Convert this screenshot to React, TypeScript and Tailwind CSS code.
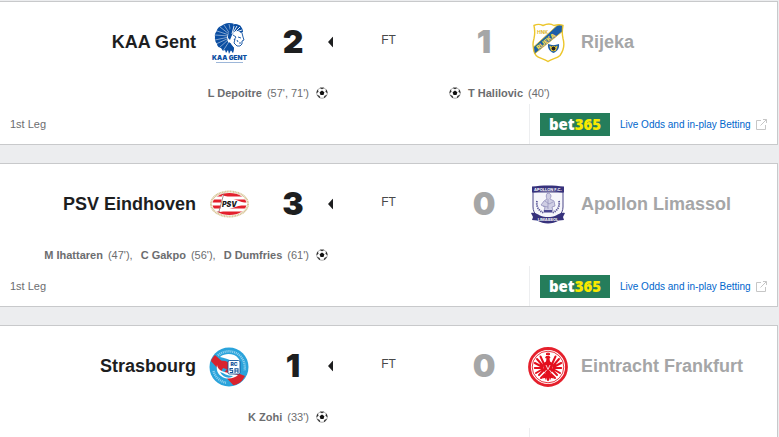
import type { ReactNode } from 'react';

type Goal = { player: string; minutes: string };

type Team = {
  name: string;
  score: number;
  badge: ReactNode;
  goals: Goal[];
};

type Match = {
  id: string;
  home: Team;
  away: Team;
  leg?: string;
};

const FEATHERS = [
  'M20 12 L8 8', 'M20 13 L6 12', 'M20 14 L6 17', 'M20 15 L7 21', 'M20 16 L10 25',
  'M20 11 L11 4', 'M21 11 L15 2', 'M22 10 L20 1', 'M23 10 L25 1', 'M21 17 L14 28',
];

function GentBadge() {
  return (
    <svg viewBox="0 0 40 40" className="w-10 h-10 mt-0.5 shrink-0" aria-hidden="true">
      <path
        d="M20 0c-3 0-5 1-7 2.500-3 1-5 3-5.500 6C6 10 5.500 12 6 14c-.5 3 .5 5 2 7 0 2 2 4 4 4l2 3 2-1 1 3 2-3 1 4 2-4 2 3 1-5-3-4 1-6 2-6 5-4 2-2C28 2 24 0 20 0Z"
        fill="#0b4ea2"
      />
      {FEATHERS.map((d) => (
        <path key={d} d={d} stroke="#fff" strokeWidth="0.600" opacity="0.8" />
      ))}
      <path d="M20 9c4-3 9-3 12 0l1 4 2 4-2 1v3l-2 2-5 1-3-3-4-2-1-5Z" fill="#fff" />
      <path d="M26 1c5 0 8 4 8 8l-2 1c-3-3-7-2-9 2l-2 5-2-2c0-6 2-10 7-14Z" fill="#0b4ea2" />
      <path d="M25 3l-2 8M28 3l-4 7M31 4l-6 6M33 7l-6 2" stroke="#fff" strokeWidth="0.900" />
      <path d="M33 10l1 4 1 3-2 1v3l-2 2h-3M29 14l3 1M26 16l-1 4 3 3M30 20h2M24 12l3 2-2 3M28 17l1 2" fill="none" stroke="#0b4ea2" strokeWidth="0.900" />
      <path d="M20 19l5 6-1 5-2-3-2 2Z" fill="#0b4ea2" />
      <text x="20.500" y="37" textAnchor="middle" fontSize="6.500" className="font-['Inter',sans-serif] font-black" fill="#0b4ea2">
        KAA GENT
      </text>
      <path d="M7 39.500H34" stroke="#0b4ea2" strokeWidth="0.8" opacity="0.5" />
    </svg>
  );
}

function RijekaBadge() {
  return (
    <svg viewBox="0 0 40 40" className="w-10 h-10 mt-0.5 shrink-0" aria-hidden="true">
      <path
        d="M6 2.500c3-1.500 7-1 9 0 4-2 8-2 11 0 3-1 6-1.500 9 0-1 5-1 9 0 13 1.500 5 .5 12-3 17-3 3-8 3-12 6-4-3-9-3-12-6-3-5-3.500-12-2-17 1-4 1-8 0-13Z"
        fill="#fff"
        stroke="#ecc62c"
        strokeWidth="1.400"
      />
      <path d="M29 2.500c2-.7 4-.7 5.500.2l-.3 6L6.500 31 5.500 24Z" fill="#1d5fa8" stroke="#ecc62c" strokeWidth="0.8" />
      <text x="9" y="10.500" fontSize="5" className="font-['Inter',sans-serif] font-bold" fill="#e0b62a">
        HNK
      </text>
      <text transform="translate(10.500 27) rotate(-39)" fontSize="6" className="font-['Inter',sans-serif] font-black" fill="#f1d556">
        RIJEKA
      </text>
      <path d="M20 21l4 1h3l4-1c.5 4-1 7-5.500 9-4.500-2-6-5-5.500-9Z" fill="#1d5fa8" />
      <path d="M22 23l2 5M29 23l-2 5" stroke="#ecc62c" strokeWidth="1.200" />
      <circle cx="25.500" cy="25.500" r="2.400" fill="#222" stroke="#ecc62c" strokeWidth="0.9" />
    </svg>
  );
}

function PsvBadge() {
  return (
    <svg viewBox="0 0 40 40" className="w-10 h-10 shrink-0" aria-hidden="true">
      <defs>
        <clipPath id="psv-oval">
          <ellipse cx="20.500" cy="20" rx="17" ry="11" />
        </clipPath>
      </defs>
      <ellipse cx="20.500" cy="20" rx="18.500" ry="12.500" fill="#fff" stroke="#d9c79a" strokeWidth="2" strokeDasharray="1.200 0.400" />
      <g clipPath="url(#psv-oval)">
        <path d="M0 9h40v3.500H0ZM0 15.500h40v3H0ZM0 21.500h40v3H0ZM0 27.500h40v4H0Z" fill="#e3202c" />
        <path d="M13 11L37 19.500 11 28Z" fill="#fff" />
        <path d="M15 9L9 31" stroke="#8d7474" strokeWidth="0.8" />
      </g>
      <text x="13" y="22.500" fontSize="7" className="font-['Inter',sans-serif] font-black italic" fill="#1a1a1a">
        PSV
      </text>
    </svg>
  );
}

function ApollonBadge() {
  return (
    <svg viewBox="0 0 40 40" className="w-10 h-10 mt-0.5 shrink-0" aria-hidden="true">
      <path d="M5 7h30v15c0 7-6 12-15 15C11 34 5 29 5 22Z" fill="#f6f6fb" stroke="#4a4688" strokeWidth="1" />
      <path d="M4 1.500c10-1.500 22-1.500 32 0v6c-10-1.500-22-1.500-32 0Z" fill="#37327c" />
      <text x="20" y="5.500" textAnchor="middle" fontSize="4" className="font-['Inter',sans-serif] font-bold" fill="#fff">
        APOLLON F.C.
      </text>
      <path d="M19 8.500c2-.8 4 .5 4 2.500 0 1.500-1 2-1 3l4 2 1 5-3 1 1 4h-9l1-4-4-2 3-4 3-2c-1-2-1-4 0-5.500Z" fill="#cfcee4" stroke="#8784b4" strokeWidth="0.7" />
      <path d="M17 16l4 3 4-2M15 21l5 1M20 14v10" fill="none" stroke="#8784b4" strokeWidth="0.6" />
      <path d="M9 16c-1 6 2 10 7 12M31 16c1 6-2 10-7 12" fill="none" stroke="#5a5698" strokeWidth="1.800" strokeDasharray="1.300 0.900" />
      <rect x="16" y="25" width="8" height="2.500" fill="#4b4790" />
      <path d="M3 28c4-1 6 1 9 2.500 5 2 11 2 16 0 3-1.500 5-3.500 9-2.500l-2 4 1 3-5 .5c-7 4-15 4-22 0L4 35l1-3Z" fill="#37327c" />
      <text x="20" y="36" textAnchor="middle" fontSize="4" className="font-['Inter',sans-serif] font-bold" fill="#fff">
        LIMASSOL
      </text>
    </svg>
  );
}

function StrasbourgBadge() {
  return (
    <svg viewBox="0 0 40 40" className="w-10 h-10 mt-0.5 shrink-0" aria-hidden="true">
      <defs>
        <clipPath id="rcs-disc">
          <circle cx="20" cy="20" r="19" />
        </clipPath>
      </defs>
      <circle cx="20" cy="20" r="19.500" fill="#2aa3db" />
      {/* Ring lettering is too small to read at this size */}
      <path d="M9 8.500A16 16 0 0 1 35.500 23.500" fill="none" stroke="#8fd0ee" strokeWidth="2.400" strokeDasharray="1.100 0.800" />
      <path d="M4.500 24A16 16 0 0 0 17 35.700" fill="none" stroke="#8fd0ee" strokeWidth="2.400" strokeDasharray="1.100 0.800" />
      <g clipPath="url(#rcs-disc)">
        <path d="M1 13L6 8 16 17 12 25Z" fill="#d9232e" />
        <path d="M18 22l18 7-6 10-4 1-12-13Z" fill="#d9232e" />
      </g>
      <path d="M11 10c6-5 15-3 18 1 2 2 2 4 2 6l-7-2c-4-3-9-4-13-5Z" fill="#fff" />
      <path d="M13 12c5 0 9 2 10 5l-2 6-8-5Z" fill="#2aa3db" />
      <path d="M11 14c5-1 9 1 11 4l-2 5-9-3Z" fill="#d9232e" />
      <path d="M8 18c1 5 5 7 12 8l9 2c-4 4-12 5-17 1-3-2-5-6-4-11Z" fill="#fff" />
      <path d="M11 25c4 1 7 4 13 4-3 3-10 2-13-4Z" fill="#2aa3db" />
      <rect x="19" y="13.500" width="12" height="13.500" rx="1.500" fill="#fff" stroke="#14539a" strokeWidth="0.9" />
      <text x="25" y="19.300" textAnchor="middle" fontSize="5" className="font-['Inter',sans-serif] font-black" fill="#14539a">
        RC
      </text>
      <path
        d="M24 21.500h-3v1.800h2.700v2.200H20.800M26 26v-4.200h3V26M26 24h3"
        fill="none"
        stroke="#14539a"
        strokeWidth="1.100"
      />
    </svg>
  );
}

function EintrachtBadge() {
  return (
    <svg viewBox="0 0 40 40" className="w-10 h-10 mt-0.5 shrink-0" aria-hidden="true">
      <circle cx="20" cy="20" r="18.500" fill="#fff" stroke="#e5202c" strokeWidth="2.800" />
      <circle cx="20" cy="20" r="15.800" fill="#fff" stroke="#e5202c" strokeWidth="0.900" />
      <path d="M18 5.500l1 1 1-1.500 1 1.500 1-1v2.500h-4Z" fill="#e30f1d" />
      <path d="M18 9l3-.5 1.500 2-1 1 .5 3 3 2-1 8-2 2 2 2 2 3-3-.5-1 2.500-1-3-1 4-1-4-1 3-1-2.500-3 .5 2-3 2-2-2-2-1-8 3-2 .5-3-1.500-.5Z" fill="#e30f1d" />
      {/* Wings */}
      <g fill="none" stroke="#e30f1d" strokeWidth="2" strokeLinecap="round">
        <path d="M16 17L12.500 9.500M15 19L9 12M14.500 20L6.800 16M14.500 21L6.800 21M15 22L8 26M16 23L11 28" />
        <path d="M24 17l3.500-7.500M25 19l6-7M25.500 20l7.700-4M25.500 21h7.700M25 22l7 4M24 23l5 5" />
        <path d="M17 27l-4 4M23 27l4 4M20 27v6" />
      </g>
      <path d="M18 18l2 4.500L22 18M17 25l1.500-2M23 25l-1.500-2" fill="none" stroke="#fff" strokeWidth="0.800" />
    </svg>
  );
}

function BallIcon() {
  return (
    <svg viewBox="0 0 12 12" className="w-3 h-3 shrink-0" role="img" aria-label="Goal">
      <circle cx="6" cy="6" r="5.300" fill="#fff" stroke="#8d8d8d" strokeWidth="0.7" />
      <path d="M6 3.600l2.400 1.700-.9 2.800h-3l-.9-2.800Z" fill="#111" />
      <path
        d="M4.300.900h3.400L6 2ZM10.300 2.800l1 3-1.600-1ZM10.600 8.300L8.300 11l.2-2ZM3.700 11L1.400 8.300l2.100.7ZM.7 5.800l1-3 .6 2Z"
        fill="#222"
        stroke="#222"
        strokeWidth="0.400"
      />
    </svg>
  );
}

function ExternalIcon() {
  return (
    <svg viewBox="0 0 11 11" className="w-[11px] h-[11px] shrink-0" fill="none" stroke="#c6c6c6" aria-hidden="true">
      <path d="M5 1.500H.5V10.500H9.500V6" />
      <path d="M7 .5H10.500V4M10.500 .5L4.500 6.500" />
    </svg>
  );
}

const MATCHES: Match[] = [
  {
    id: 'gent-rijeka',
    home: { name: 'KAA Gent', score: 2, badge: <GentBadge />, goals: [{ player: 'L Depoitre', minutes: "(57', 71')" }] },
    away: { name: 'Rijeka', score: 1, badge: <RijekaBadge />, goals: [{ player: 'T Halilovic', minutes: "(40')" }] },
    leg: '1st Leg',
  },
  {
    id: 'psv-apollon',
    home: {
      name: 'PSV Eindhoven',
      score: 3,
      badge: <PsvBadge />,
      goals: [
        { player: 'M Ihattaren', minutes: "(47')" },
        { player: 'C Gakpo', minutes: "(56')" },
        { player: 'D Dumfries', minutes: "(61')" },
      ],
    },
    away: { name: 'Apollon Limassol', score: 0, badge: <ApollonBadge />, goals: [] },
    leg: '1st Leg',
  },
  {
    id: 'strasbourg-frankfurt',
    home: { name: 'Strasbourg', score: 1, badge: <StrasbourgBadge />, goals: [{ player: 'K Zohi', minutes: "(33')" }] },
    away: { name: 'Eintracht Frankfurt', score: 0, badge: <EintrachtBadge />, goals: [] },
  },
];

function GoalList({ goals }: { goals: Goal[] }) {
  return (
    <ul className="flex gap-2">
      {goals.map((goal, i) => (
        <li key={goal.player} className="flex gap-[5px] whitespace-nowrap">
          <span className="font-bold">{goal.player}</span>
          <span>
            {goal.minutes}
            {i < goals.length - 1 && ','}
          </span>
        </li>
      ))}
    </ul>
  );
}

function OddsLink() {
  return (
    <a href="#odds" className="flex items-center text-[10px] text-[#06c] whitespace-nowrap">
      <span className="w-[70px] h-[23px] mr-2.5 bg-[#257d5b] flex items-center justify-center font-['Open_Sans',sans-serif] text-[15px] leading-none font-extrabold text-white">
        bet<span className="text-[#f9e900]">365</span>
      </span>
      Live Odds and in-play Betting
      <span className="ml-[5px]">
        <ExternalIcon />
      </span>
    </a>
  );
}

function MatchCard({ match }: { match: Match }) {
  const { home, away, leg } = match;

  return (
    <article className="bg-white border-y border-r border-[#c8c9cb]">
      {/* Teams and score */}
      <div className="h-20 flex items-center">
        <div className="flex-1 flex items-center justify-end gap-[13px]">
          <h2 className="text-[18px] font-bold text-[#1d1e1f]">{home.name}</h2>
          {home.badge}
        </div>
        <div className="w-22 relative text-center font-['Inter',sans-serif] text-[32px] font-black text-[#1d1e1f]">
          {home.score}
          <svg viewBox="0 0 5 11" className="absolute right-1 top-1/2 -translate-y-1/2 w-[5px] h-[11px]" role="img" aria-label="Winner">
            <path d="M5 0v11L0 5.500Z" fill="#1d1e1f" />
          </svg>
        </div>
        <p className="w-[103px] pb-1 text-center text-[12px] text-[#48494a]">FT</p>
        <div className="w-22 text-center font-['Inter',sans-serif] text-[32px] font-black text-[#a5a6a7]">{away.score}</div>
        <div className="flex-1 flex items-center gap-[13px]">
          {away.badge}
          <h2 className="text-[18px] font-bold text-[#a5a6a7]">{away.name}</h2>
        </div>
      </div>

      {/* Scorers */}
      <div className="h-[22px] flex text-[11px] text-[#6c6d6f]">
        <div className="flex-1 flex items-center justify-end gap-[7px] pr-[61px]">
          <GoalList goals={home.goals} />
          <BallIcon />
        </div>
        <div className="flex-1 flex items-center gap-[7px] pl-[60px]">
          {away.goals.length > 0 && <BallIcon />}
          <GoalList goals={away.goals} />
        </div>
      </div>

      {/* Leg and odds */}
      <div className="h-10 flex text-[11px] text-[#6c6d6f]">
        <p className="flex-1 flex items-center pl-2.5">{leg}</p>
        <div className="w-62 pl-2.5 border-l border-[#edeef0] flex items-center">{leg && <OddsLink />}</div>
      </div>
    </article>
  );
}

export default function App() {
  return (
    <main className="h-screen overflow-hidden bg-[#ecedef] pt-px pr-px flex flex-col gap-[18px] font-['Liberation_Sans',Arial,sans-serif]">
      {MATCHES.map((match) => (
        <MatchCard key={match.id} match={match} />
      ))}
    </main>
  );
}
